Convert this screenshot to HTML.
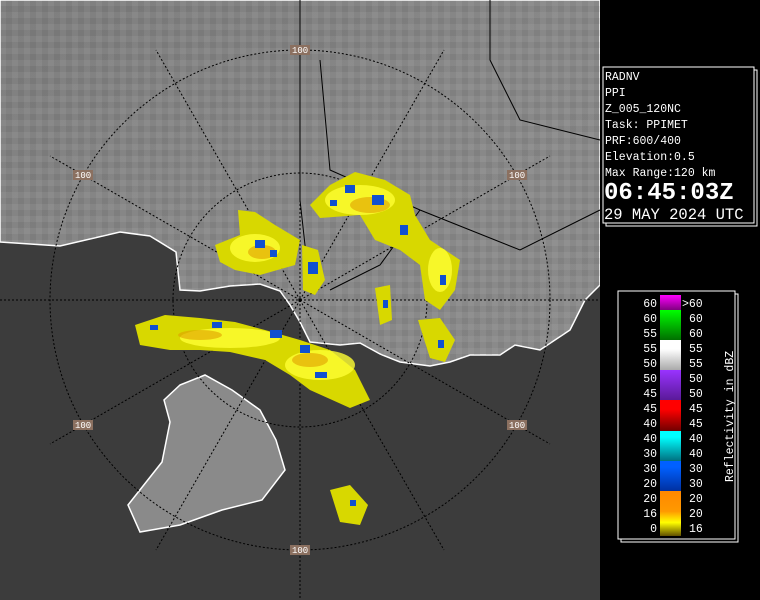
<!DOCTYPE html>
<html><head><meta charset="utf-8"><style>
html,body{margin:0;padding:0;background:#000;width:760px;height:600px;overflow:hidden}
.t{font-family:"Liberation Mono","DejaVu Sans Mono",monospace;fill:#fff}
</style></head><body>
<svg width="760" height="600" xmlns="http://www.w3.org/2000/svg">
<defs>
<linearGradient id="lg" x1="0" y1="0" x2="1" y2="1">
<stop offset="0" stop-color="#7e7e7e"/><stop offset="0.5" stop-color="#888"/><stop offset="1" stop-color="#8a8a8a"/>
</linearGradient>
<pattern id="tx" width="12" height="12" patternUnits="userSpaceOnUse">
<rect width="12" height="12" fill="none"/><rect x="0" y="0" width="6" height="6" fill="#fff" opacity="0.06"/><rect x="6" y="6" width="6" height="6" fill="#000" opacity="0.06"/>
</pattern>
<linearGradient id="c1" x1="0" y1="0" x2="0" y2="1"><stop offset="0" stop-color="#ff00ff"/><stop offset="1" stop-color="#800080"/></linearGradient>
<linearGradient id="c2" x1="0" y1="0" x2="0" y2="1"><stop offset="0" stop-color="#00ff00"/><stop offset="1" stop-color="#007000"/></linearGradient>
<linearGradient id="c3" x1="0" y1="0" x2="0" y2="1"><stop offset="0.3" stop-color="#fff"/><stop offset="1" stop-color="#aaa"/></linearGradient>
<linearGradient id="c4" x1="0" y1="0" x2="0" y2="1"><stop offset="0" stop-color="#9933ff"/><stop offset="1" stop-color="#5a1a99"/></linearGradient>
<linearGradient id="c5" x1="0" y1="0" x2="0" y2="1"><stop offset="0.3" stop-color="#ff0000"/><stop offset="1" stop-color="#700000"/></linearGradient>
<linearGradient id="c6" x1="0" y1="0" x2="0" y2="1"><stop offset="0.2" stop-color="#00ffff"/><stop offset="1" stop-color="#007080"/></linearGradient>
<linearGradient id="c7" x1="0" y1="0" x2="0" y2="1"><stop offset="0.2" stop-color="#0060ff"/><stop offset="1" stop-color="#0030a0"/></linearGradient>
<linearGradient id="c8" x1="0" y1="0" x2="0" y2="1"><stop offset="0" stop-color="#ff8800"/><stop offset="0.45" stop-color="#ff9900"/><stop offset="0.7" stop-color="#ffff00"/><stop offset="1" stop-color="#605000"/></linearGradient>
</defs>
<rect x="0" y="0" width="600" height="600" fill="#3c3c3c"/>
<path d="M0,0H600V285L585,300L570,330L540,350L515,345L500,355L470,355L450,362L430,366L400,362L380,354L360,343L340,345L310,342L300,322L290,305L280,291L260,284L230,286L200,291L180,290L176,252L150,236L120,232L60,246L0,242Z" fill="url(#lg)" stroke="#fff" stroke-width="1.5"/>
<path d="M0,0H600V285L585,300L570,330L540,350L515,345L500,355L470,355L450,362L430,366L400,362L380,354L360,343L340,345L310,342L300,322L290,305L280,291L260,284L230,286L200,291L180,290L176,252L150,236L120,232L60,246L0,242Z" fill="url(#tx)"/>
<path d="M180,385L205,375L232,390L260,410L276,440L285,470L262,500L222,510L180,525L140,532L128,505L162,462L170,422L164,400Z" fill="#8a8a8a" stroke="#fff" stroke-width="1.5"/>
<g fill="none" stroke="#000" stroke-width="1" stroke-dasharray="2,2">
<circle cx="300" cy="300" r="250"/><circle cx="300" cy="300" r="127"/>
<line x1="0" y1="300" x2="600" y2="300"/><line x1="300" y1="0" x2="300" y2="600"/>
<line x1="300" y1="300" x2="156" y2="50"/><line x1="300" y1="300" x2="444" y2="50"/>
<line x1="300" y1="300" x2="156" y2="550"/><line x1="300" y1="300" x2="444" y2="550"/>
<line x1="300" y1="300" x2="50" y2="156"/><line x1="300" y1="300" x2="550" y2="156"/>
<line x1="300" y1="300" x2="50" y2="444"/><line x1="300" y1="300" x2="550" y2="444"/>
</g>
<g fill="none" stroke="#000" stroke-width="1">
<path d="M300,0V200L310,290M320,60L330,170L420,210L470,230L520,250L600,210M490,0V60L520,120L600,140M420,210L380,265L330,290"/>
</g>
<g fill="#d8d800">
<path d="M310,205L330,185L355,172L385,180L410,195L415,215L430,240L460,260L455,290L440,310L425,300L420,265L400,250L375,240L360,215L320,218Z"/>
<path d="M215,245L240,235L238,210L255,212L275,225L300,240L295,265L260,275L235,270L220,262Z"/>
<path d="M302,245L318,250L325,280L315,295L303,290Z"/>
<path d="M135,325L165,315L200,318L235,322L265,330L300,340L330,350L355,370L370,400L350,408L310,390L290,375L265,360L230,352L200,350L170,350L140,345Z"/>
<path d="M375,288L390,285L392,320L380,325Z"/>
<path d="M418,320L440,318L455,340L445,362L430,358Z"/>
<path d="M330,490L350,485L368,505L360,525L340,522Z"/>
</g>
<g fill="#ffff33" opacity="0.8">
<ellipse cx="360" cy="200" rx="35" ry="15"/><ellipse cx="255" cy="248" rx="25" ry="14"/><ellipse cx="230" cy="338" rx="50" ry="10"/><ellipse cx="320" cy="365" rx="35" ry="15"/><ellipse cx="440" cy="270" rx="12" ry="22"/>
</g>
<g fill="#e0a000" opacity="0.6">
<ellipse cx="370" cy="205" rx="20" ry="8"/><ellipse cx="262" cy="252" rx="14" ry="7"/><ellipse cx="310" cy="360" rx="18" ry="7"/><ellipse cx="200" cy="335" rx="22" ry="5"/>
</g>
<g fill="#1050d0">
<rect x="345" y="185" width="10" height="8"/><rect x="372" y="195" width="12" height="10"/><rect x="330" y="200" width="7" height="6"/><rect x="400" y="225" width="8" height="10"/>
<rect x="255" y="240" width="10" height="8"/><rect x="270" y="250" width="7" height="7"/><rect x="308" y="262" width="10" height="12"/>
<rect x="212" y="322" width="10" height="6"/><rect x="150" y="325" width="8" height="5"/><rect x="270" y="330" width="12" height="8"/><rect x="300" y="345" width="10" height="8"/><rect x="315" y="372" width="12" height="6"/><rect x="440" y="275" width="6" height="10"/><rect x="383" y="300" width="5" height="8"/><rect x="438" y="340" width="6" height="8"/><rect x="350" y="500" width="6" height="6"/>
</g>
<g font-family="Liberation Mono,monospace" font-size="9" fill="#fff">
<rect x="290" y="45" width="20" height="10" fill="#8b7060"/><text x="292" y="53">100</text>
<rect x="73" y="170" width="20" height="10" fill="#8b7060"/><text x="75" y="178">100</text>
<rect x="507" y="170" width="20" height="10" fill="#8b7060"/><text x="509" y="178">100</text>
<rect x="73" y="420" width="20" height="10" fill="#8b7060"/><text x="75" y="428">100</text>
<rect x="507" y="420" width="20" height="10" fill="#8b7060"/><text x="509" y="428">100</text>
<rect x="290" y="545" width="20" height="10" fill="#8b7060"/><text x="292" y="553">100</text>
</g>
<rect x="600" y="0" width="160" height="600" fill="#000"/>
<rect x="606" y="70" width="151" height="156" fill="none" stroke="#fff"/>
<rect x="603" y="67" width="151" height="156" fill="#000" stroke="#fff"/>
<g class="t" font-size="11.5">
<text x="605" y="80">RADNV</text><text x="605" y="96">PPI</text><text x="605" y="112">Z_005_120NC</text>
<text x="605" y="128">Task: PPIMET</text><text x="605" y="144">PRF:600/400</text><text x="605" y="160">Elevation:0.5</text>
<text x="605" y="176">Max Range:120 km</text>
<text x="604" y="199" font-size="24" font-weight="bold">06:45:03Z</text>
<text x="604" y="219" font-size="15.5">29 MAY 2024 UTC</text>
</g>
<rect x="621" y="294" width="117" height="248" fill="none" stroke="#fff"/>
<rect x="618" y="291" width="117" height="248" fill="#000" stroke="#fff"/>
<rect x="660" y="295" width="21" height="15" fill="url(#c1)"/>
<rect x="660" y="310" width="21" height="30" fill="url(#c2)"/>
<rect x="660" y="340" width="21" height="30" fill="url(#c3)"/>
<rect x="660" y="370" width="21" height="30" fill="url(#c4)"/>
<rect x="660" y="400" width="21" height="31" fill="url(#c5)"/>
<rect x="660" y="431" width="21" height="30" fill="url(#c6)"/>
<rect x="660" y="461" width="21" height="30" fill="url(#c7)"/>
<rect x="660" y="491" width="21" height="45" fill="url(#c8)"/>
<g class="t" font-size="11.5">
<g text-anchor="end">
<text x="657" y="307">60</text><text x="657" y="322">60</text><text x="657" y="337">55</text><text x="657" y="352">55</text><text x="657" y="367">50</text><text x="657" y="382">50</text><text x="657" y="397">45</text><text x="657" y="412">45</text><text x="657" y="427">40</text><text x="657" y="442">40</text><text x="657" y="457">30</text><text x="657" y="472">30</text><text x="657" y="487">20</text><text x="657" y="502">20</text><text x="657" y="517">16</text><text x="657" y="532">0</text>
</g>
<text x="682" y="307">&gt;60</text><text x="689" y="322">60</text><text x="689" y="337">60</text><text x="689" y="352">55</text><text x="689" y="367">55</text><text x="689" y="382">50</text><text x="689" y="397">50</text><text x="689" y="412">45</text><text x="689" y="427">45</text><text x="689" y="442">40</text><text x="689" y="457">40</text><text x="689" y="472">30</text><text x="689" y="487">30</text><text x="689" y="502">20</text><text x="689" y="517">20</text><text x="689" y="532">16</text>
<text transform="translate(733,482) rotate(-90)">Reflectivity in dBZ</text>
</g>
</svg>
</body></html>
